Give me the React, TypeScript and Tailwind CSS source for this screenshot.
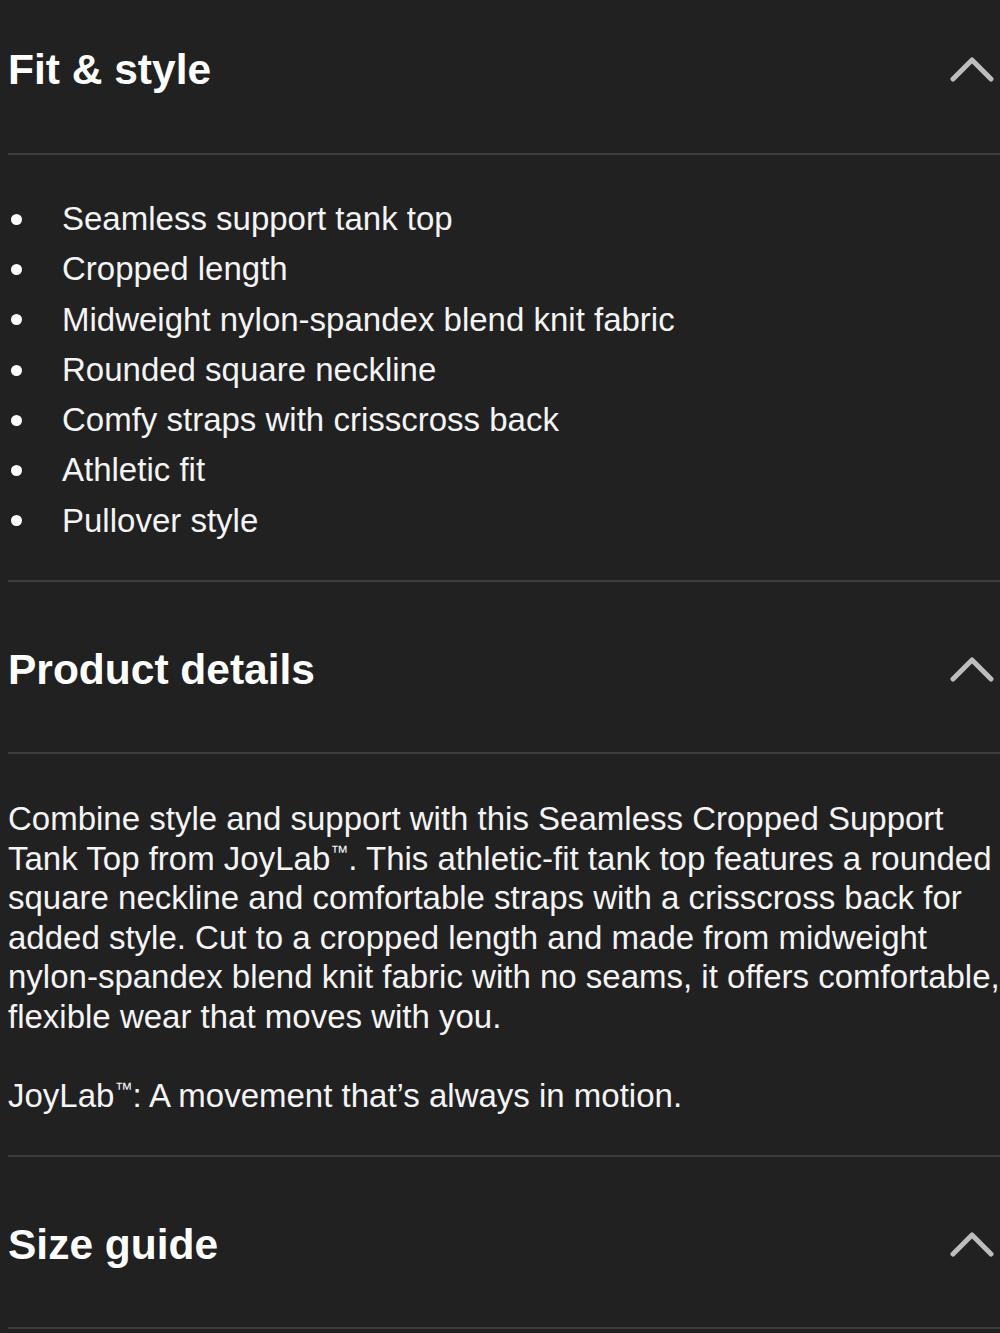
const fitItems = [
  "Seamless support tank top",
  "Cropped length",
  "Midweight nylon-spandex blend knit fabric",
  "Rounded square neckline",
  "Comfy straps with crisscross back",
  "Athletic fit",
  "Pullover style",
];

function Chevron() {
  return (
    <svg width="44" height="30" viewBox="0 0 44 30" fill="none" className="shrink-0">
      <path
        d="M3 24 L22 5 L41 24"
        stroke="#bdbdbd"
        strokeWidth="5"
        strokeLinecap="round"
        strokeLinejoin="round"
      />
    </svg>
  );
}

function SectionHeader({ title, first }: { title: string; first?: boolean }) {
  return (
    <div
      className={`flex items-center justify-between pr-[6px] border-b-2 border-[#3d3d3d] ${
        first ? "pt-[46px] pb-[59px]" : "pt-[64px] pb-[58px]"
      }`}
    >
      <h2 className="text-[42.5px] leading-[48px] font-bold text-white">{title}</h2>
      <Chevron />
    </div>
  );
}

function Tm() {
  return <span className="relative -top-[12px] text-[18px] leading-none">™</span>;
}

export default function App() {
  return (
    <main
      className="min-h-[1333px] bg-[#212121] text-[#f4f4f4] pl-[8px] overflow-hidden"
      style={{ fontFamily: '"Liberation Sans", Arial, Helvetica, sans-serif' }}
    >
      {/* Fit & style */}
      <section>
        <SectionHeader title="Fit & style" first />
        <ul className="pt-[39px] pb-[34px] border-b-2 border-[#3d3d3d]">
          {fitItems.map((item) => (
            <li key={item} className="flex items-center text-[33px] leading-[50.3px]">
              <span className="w-[54px] shrink-0 flex">
                <span className="ml-[3px] w-[11px] h-[11px] rounded-full bg-white" />
              </span>
              {item}
            </li>
          ))}
        </ul>
      </section>

      {/* Product details */}
      <section>
        <SectionHeader title="Product details" />
        <p className="pt-[45px] pb-[39px] text-[33px] leading-[39.6px] whitespace-nowrap border-b-2 border-[#3d3d3d]">
          Combine style and support with this Seamless Cropped Support
          <br />
          Tank Top from JoyLab<Tm />. This athletic-fit tank top features a rounded
          <br />
          square neckline and comfortable straps with a crisscross back for
          <br />
          added style. Cut to a cropped length and made from midweight
          <br />
          nylon-spandex blend knit fabric with no seams, it offers comfortable,
          <br />
          flexible wear that moves with you.
          <br />
          <br />
          JoyLab<Tm />: A movement that’s always in motion.
        </p>
      </section>

      {/* Size guide */}
      <section>
        <SectionHeader title="Size guide" />
      </section>
    </main>
  );
}
